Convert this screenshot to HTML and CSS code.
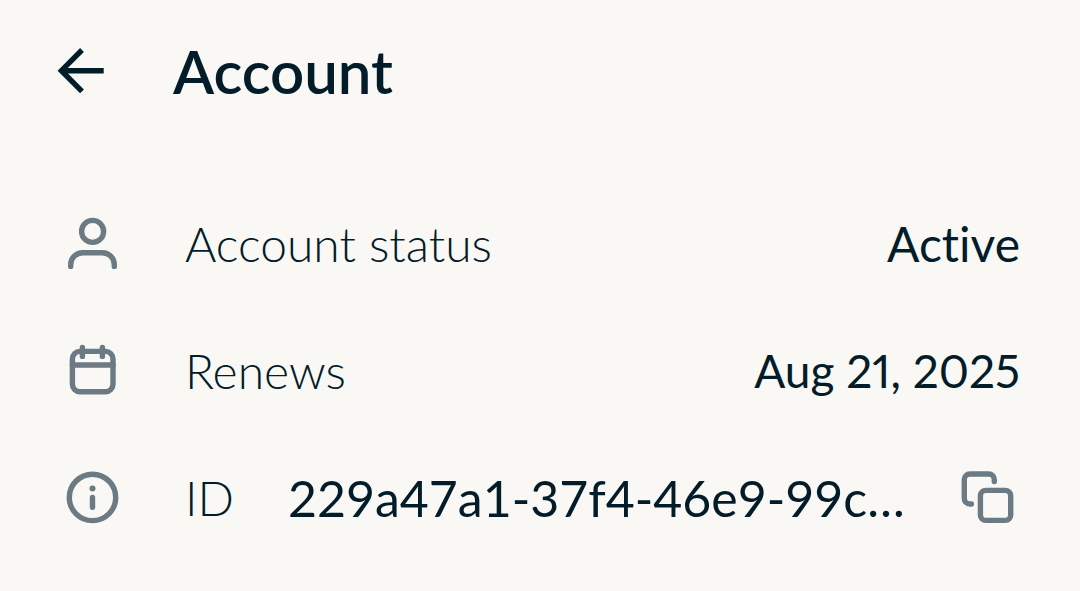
FILE: index.html
```html
<!DOCTYPE html>
<html lang="en">
<head>
<meta charset="utf-8">
<meta name="viewport" content="width=device-width, initial-scale=1">
<title>Account</title>
<link rel="stylesheet" href="styles.css">
</head>
<body>
<header class="topbar">
  <button class="icon-button" type="button" aria-label="Back">
    <svg class="icon icon-back" viewBox="0 0 60 60" aria-hidden="true"><path d="M53.7 29.7H12M32 9 11.4 29.7 32 50.4"/></svg>
  </button>
  <h1 class="title">Account</h1>
</header>
<main class="details">
  <div class="row">
    <svg class="icon" viewBox="0 0 60 60" aria-hidden="true"><circle cx="30.6" cy="18.4" r="11"/><path d="M8.7 53.4V51.7a12 12 0 0 1 12-12h19.6a12 12 0 0 1 12 12v1.7"/></svg>
    <span class="label">Account status</span>
    <span class="value">Active</span>
  </div>
  <div class="row">
    <svg class="icon" viewBox="0 0 60 60" aria-hidden="true"><rect x="10.4" y="11.4" width="40.6" height="40.4" rx="7.5"/><path d="M10.4 25H51M20.4 7.4v9M40.4 7.4v9"/></svg>
    <span class="label">Renews</span>
    <span class="value value-date">Aug 21, 2025</span>
  </div>
  <div class="row">
    <svg class="icon" viewBox="0 0 60 60" aria-hidden="true"><circle cx="30.5" cy="30.4" r="23.2"/><circle class="dot" cx="30.5" cy="21.4" r="3"/><path d="M30.5 30.4v10"/></svg>
    <span class="label">ID</span>
    <span class="value value-id">229a47a1-37f4-46e9-99c…</span>
    <button class="icon-button copy" type="button" aria-label="Copy ID">
      <svg class="icon" viewBox="0 0 60 60" aria-hidden="true"><path d="M13.4 37h-1.6a5.5 5.5 0 0 1-5.5-5.5v-19A5.5 5.5 0 0 1 11.8 7h19a5.5 5.5 0 0 1 5.5 5.5v2"/><rect x="22.4" y="23.4" width="30.3" height="30" rx="5.5"/></svg>
    </button>
  </div>
</main>
</body>
</html>
```
FILE: styles.css
```css
body {
  margin: 0;
  background: #f9f8f4;
  color: #021c29;
  font-family: Lato, "Noto Sans", sans-serif;
  font-variant-ligatures: none;
}

.topbar {
  display: flex;
  align-items: center;
  gap: 63px;
  padding: 36px 50px 0;
}

.title {
  margin: 0;
  font-size: 60px;
  font-weight: 600;
  line-height: 70px;
}

.icon-button {
  display: block;
  padding: 0;
  border: 0;
  background: none;
  color: inherit;
  cursor: pointer;
}

.icon {
  display: block;
  flex: none;
  width: 60px;
  height: 60px;
  fill: none;
  stroke: #6b7a83;
  stroke-width: 5.4;
  stroke-linecap: round;
  stroke-linejoin: round;
}

.icon-back {
  stroke: #021c29;
  stroke-linecap: butt;
  stroke-linejoin: miter;
}

.dot {
  fill: #6b7a83;
  stroke: none;
}

.details {
  display: grid;
  gap: 67px;
  padding: 107px 60px 64px 62px;
}

.row {
  display: flex;
  align-items: center;
  font-size: 48px;
  line-height: 58px;
  white-space: nowrap;
}

.label,
.value {
  padding-top: 2px;
}

.label {
  margin-left: 63px;
  font-weight: 300;
}

.value {
  margin-left: auto;
  font-weight: 400;
}

.value-date {
  font-size: 46px;
  font-variant-numeric: proportional-nums;
}

.value-id {
  flex: 1;
  min-width: 0;
  margin-left: 54px;
  overflow: hidden;
  font-size: 50px;
  text-overflow: ellipsis;
}

.copy {
  margin: 0 2px 0 32px;
}
```
